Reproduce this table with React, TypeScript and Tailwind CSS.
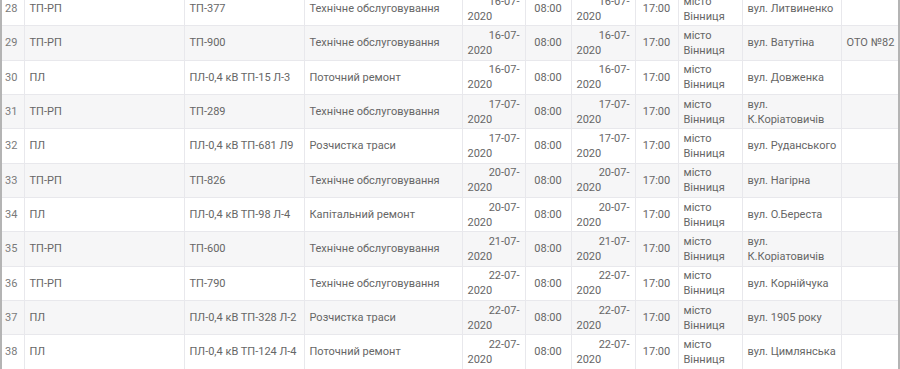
import React from 'react';

type Row = {
  n: number;
  kind: string;
  obj: string;
  work: string;
  date: string;
  street: string[];
  note?: string;
};

const rows: Row[] = [
  { n: 28, kind: 'ТП-РП', obj: 'ТП-377', work: 'Технічне обслуговування', date: '16-07-', street: ['вул. Литвиненко'] },
  { n: 29, kind: 'ТП-РП', obj: 'ТП-900', work: 'Технічне обслуговування', date: '16-07-', street: ['вул. Ватутіна'], note: 'ОТО №82' },
  { n: 30, kind: 'ПЛ', obj: 'ПЛ-0,4 кВ ТП-15 Л-3', work: 'Поточний ремонт', date: '16-07-', street: ['вул. Довженка'] },
  { n: 31, kind: 'ТП-РП', obj: 'ТП-289', work: 'Технічне обслуговування', date: '17-07-', street: ['вул.', 'К.Коріатовичів'] },
  { n: 32, kind: 'ПЛ', obj: 'ПЛ-0,4 кВ ТП-681 Л9', work: 'Розчистка траси', date: '17-07-', street: ['вул. Руданського'] },
  { n: 33, kind: 'ТП-РП', obj: 'ТП-826', work: 'Технічне обслуговування', date: '20-07-', street: ['вул. Нагірна'] },
  { n: 34, kind: 'ПЛ', obj: 'ПЛ-0,4 кВ ТП-98 Л-4', work: 'Капітальний ремонт', date: '20-07-', street: ['вул. О.Береста'] },
  { n: 35, kind: 'ТП-РП', obj: 'ТП-600', work: 'Технічне обслуговування', date: '21-07-', street: ['вул.', 'К.Коріатовичів'] },
  { n: 36, kind: 'ТП-РП', obj: 'ТП-790', work: 'Технічне обслуговування', date: '22-07-', street: ['вул. Корнійчука'] },
  { n: 37, kind: 'ПЛ', obj: 'ПЛ-0,4 кВ ТП-328 Л-2', work: 'Розчистка траси', date: '22-07-', street: ['вул. 1905 року'] },
  { n: 38, kind: 'ПЛ', obj: 'ПЛ-0,4 кВ ТП-124 Л-4', work: 'Поточний ремонт', date: '22-07-', street: ['вул. Цимлянська'] },
];

const td = 'border border-[#e8e8ec] px-[5px] py-0 align-middle leading-[15px] whitespace-nowrap overflow-hidden';

function DateCell({ d }: { d: string }) {
  return (
    <td className={td}>
      <div className="text-right">{d}</div>
      <div className="text-left">2020</div>
    </td>
  );
}

export default function App() {
  return (
    <div className="h-[369px] w-[900px] overflow-hidden bg-white">
      <table
        className="mt-[-9px] w-[898px] table-fixed border-collapse border-l-2 border-l-[#b4b4b4] border-r-2 border-r-[#b4b4b4] text-[11px] text-[#666]"
        style={{ fontFamily: 'Roboto, "Open Sans", sans-serif' }}
      >
        <colgroup>
          <col className="w-[23px]" />
          <col className="w-[160px]" />
          <col className="w-[120px]" />
          <col className="w-[158px]" />
          <col className="w-[63px]" />
          <col className="w-[46px]" />
          <col className="w-[64px]" />
          <col className="w-[43px]" />
          <col className="w-[64px]" />
          <col className="w-[99px]" />
          <col className="w-[58px]" />
        </colgroup>
        <tbody>
          {rows.map((r, i) => (
            <tr key={r.n} className={`h-[34.33px] ${i % 2 === 1 ? 'bg-[#f6f6f7]' : 'bg-white'}`}>
              <td className={`${td} border-l-0 pl-[3px] text-[#7a7a7a]`}>{r.n}</td>
              <td className={td}>{r.kind}</td>
              <td className={td}>{r.obj}</td>
              <td className={td}>{r.work}</td>
              <DateCell d={r.date} />
              <td className={`${td} text-center`}>08:00</td>
              <DateCell d={r.date} />
              <td className={`${td} text-center`}>17:00</td>
              <td className={td}>
                <div>місто</div>
                <div>Вінниця</div>
              </td>
              <td className={td}>
                {r.street.map((s) => (
                  <div key={s}>{s}</div>
                ))}
              </td>
              <td className={`${td} border-r-0`}>{r.note ?? ''}</td>
            </tr>
          ))}
        </tbody>
      </table>
    </div>
  );
}
